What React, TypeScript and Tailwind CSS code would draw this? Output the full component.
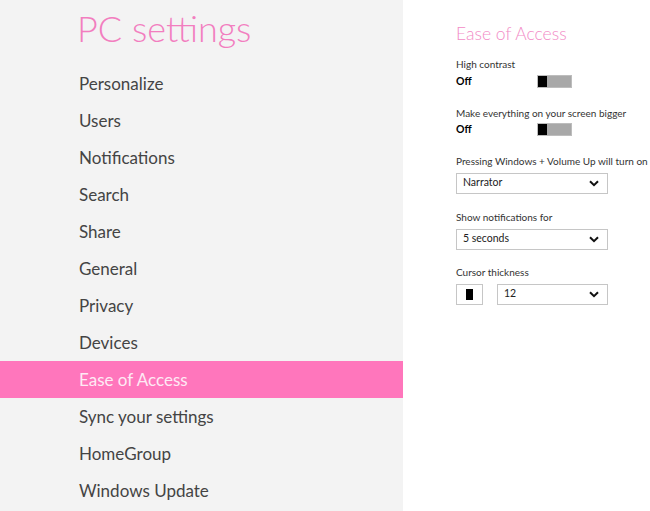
import React from 'react';

const menu = [
  'Personalize',
  'Users',
  'Notifications',
  'Search',
  'Share',
  'General',
  'Privacy',
  'Devices',
  'Ease of Access',
  'Sync your settings',
  'HomeGroup',
  'Windows Update',
];

const Toggle: React.FC = () => (
  <div className="flex h-[13px] w-[35px] border border-[#bdbdbd] bg-[#a8a8a8]">
    <div className="h-full w-[9px] bg-black" />
  </div>
);

const Chevron: React.FC = () => (
  <svg width="10" height="7" viewBox="0 0 10 7" className="shrink-0">
    <path d="M1 1.2 L5 5.2 L9 1.2" fill="none" stroke="#111" strokeWidth="2" />
  </svg>
);

const Select: React.FC<{ value: string; className?: string }> = ({ value, className }) => (
  <div
    className={`flex h-[21px] items-center justify-between border border-[#c6c6c6] bg-white pl-[6px] pr-[8px] text-[10.5px] text-[#222] ${className ?? ''}`}
  >
    <span>{value}</span>
    <Chevron />
  </div>
);

const App: React.FC = () => {
  return (
    <div className="flex h-[511px] w-[650px] overflow-hidden bg-white font-['Lato',sans-serif]">
      <div className="w-[403px] shrink-0 bg-[#f3f3f3]">
        <h1 className="pl-[77px] pt-[2px] text-[36px] font-light leading-[52px] text-[#f27ebf]">PC settings</h1>
        <ul className="mt-[11px]">
          {menu.map((item) => {
            const active = item === 'Ease of Access';
            return (
              <li
                key={item}
                className={`flex h-[37px] items-center pl-[79px] text-[17px] font-normal ${
                  active ? 'bg-[#ff76bc] text-[#feeaf4]' : 'text-[#444]'
                }`}
              >
                {item}
              </li>
            );
          })}
        </ul>
      </div>
      <div className="flex-1 whitespace-nowrap pl-[53px] pt-[22px] text-[#333]">
        <h2 className="text-[17.5px] font-light leading-[24px] text-[#f28cc6]">Ease of Access</h2>
        <div className="mt-[10px] text-[10px] leading-[16px]">High contrast</div>
        <div className="mt-[2px] flex items-center">
          <span className="w-[81px] text-[10.5px] font-bold text-black">Off</span>
          <Toggle />
        </div>
        <div className="mt-[15px] text-[10px] leading-[16px]">Make everything on your screen bigger</div>
        <div className="mt-[1px] flex items-center">
          <span className="w-[81px] text-[10.5px] font-bold text-black">Off</span>
          <Toggle />
        </div>
        <div className="mt-[15px] text-[10px] leading-[16px]">Pressing Windows + Volume Up will turn on</div>
        <Select value="Narrator" className="mt-[4px] w-[152px]" />
        <div className="mt-[15px] text-[10px] leading-[16px]">Show notifications for</div>
        <Select value="5 seconds" className="mt-[4px] w-[152px]" />
        <div className="mt-[14px] text-[10px] leading-[16px]">Cursor thickness</div>
        <div className="mt-[4px] flex gap-[14px]">
          <div className="flex h-[21px] w-[27px] items-center justify-center border border-[#c6c6c6] bg-white">
            <div className="h-[11px] w-[7px] bg-black" />
          </div>
          <Select value="12" className="w-[111px]" />
        </div>
      </div>
    </div>
  );
};

export default App;
